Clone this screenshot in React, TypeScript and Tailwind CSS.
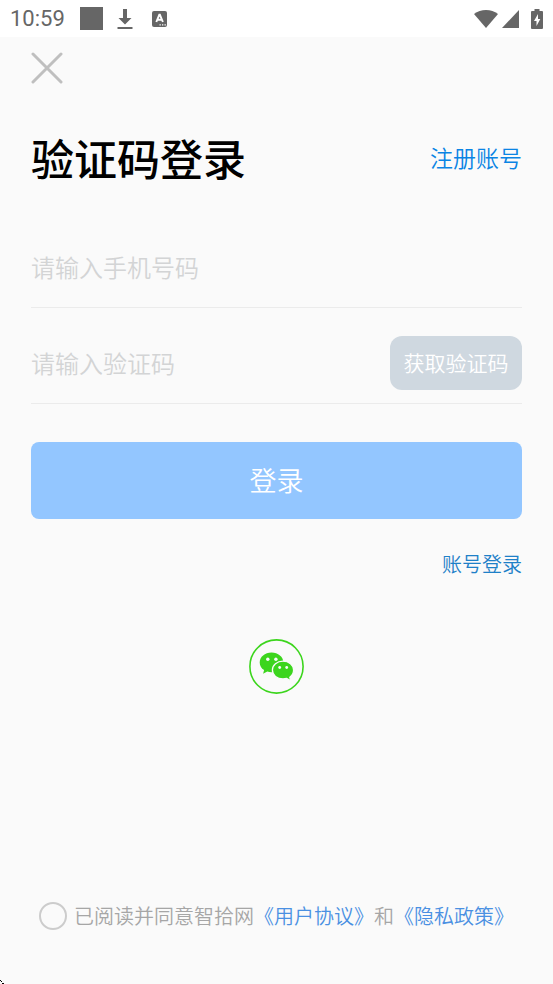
import { useState } from "react";
import type { FormEvent } from "react";

function StatusBar() {
  return (
    <div className="flex h-[37px] shrink-0 items-center justify-between bg-white px-[10px] text-[#666666]">
      <div className="flex items-center">
        <span className="font-[Roboto,sans-serif] text-[22px] font-normal leading-6">
          10:59
        </span>
        <span className="ml-[15px] h-[23px] w-[23px] bg-[#666666]" />
        <svg className="ml-[14px] h-[22px] w-4" viewBox="0 0 16 22" fill="currentColor">
          <path d="M6 1h4v9h4.5L8 16.5 1.500 10H6z" />
          <path d="M0.500 19h15v2h-15z" />
        </svg>
        <svg className="ml-[19px] h-4 w-[15px]" viewBox="0 0 15 16">
          <rect width="15" height="16" rx="2" fill="currentColor" />
          <path
            d="M4.300 11 7.300 3.800h.6L10.900 11M5.500 8.800h4.200"
            fill="none"
            stroke="white"
            strokeWidth="1.900"
          />
          <path d="M7.500 13.200h1.300v1.300H7.500zM10 13.200h1.300v1.300H10zM12.500 13.200h1.300v1.300h-1.300z" fill="white" />
        </svg>
      </div>
      <div className="flex items-center" aria-hidden="true">
        <svg className="h-[18px] w-6" viewBox="0 0 24 18" fill="currentColor">
          <path d="M12 18 0 4C3.500 1.300 7.500 0 12 0s8.500 1.300 12 4z" />
        </svg>
        <svg className="ml-1 h-[18px] w-[17px]" viewBox="0 0 17 18" fill="currentColor">
          <path d="M17 0v18H0z" />
        </svg>
        <svg className="ml-3 h-5 w-3" viewBox="0 0 12 20">
          <path d="M3.500 0h5v2H11a1 1 0 0 1 1 1v16a1 1 0 0 1-1 1H1a1 1 0 0 1-1-1V3a1 1 0 0 1 1-1h2.500z" fill="currentColor" />
          <path d="M7 5 3 12h2.500v5L9.300 10H7z" fill="white" />
        </svg>
      </div>
    </div>
  );
}

function WechatIcon() {
  return (
    <svg className="h-[55px] w-[55px]" viewBox="0 0 55 55">
      <circle cx="27.500" cy="27.500" r="26.600" fill="none" stroke="#3cd51d" strokeWidth="1.600" />
      <path
        d="M22.500 13.500c-6.600 0-11.800 4.400-11.800 9.900 0 3.200 1.600 5.900 4.400 7.700l-1 3.700 4.200-2.200c1.300.4 2.700.6 4.200.6 6.600 0 11.900-4.300 11.900-9.800s-5.300-9.900-11.900-9.900z"
        fill="#3cd51d"
      />
      <path
        d="M34 22.200c-6 0-10.600 3.900-10.600 8.900S28 40 34 40c1.300 0 2.600-.2 3.700-.5l4 2.200-.9-3.400c2.300-1.600 3.800-4.200 3.800-7.200 0-5-4.700-8.900-10.600-8.900z"
        fill="#3cd51d"
        stroke="#fafafa"
        strokeWidth="1.300"
      />
      <g fill="#fafafa">
        <circle cx="18.800" cy="20.300" r="1.700" />
        <circle cx="26.900" cy="20.300" r="1.700" />
        <circle cx="30.700" cy="28.500" r="1.400" />
        <circle cx="37.700" cy="28.500" r="1.400" />
      </g>
    </svg>
  );
}

export default function App() {
  const [phone, setPhone] = useState("");
  const [code, setCode] = useState("");
  const [agreed, setAgreed] = useState(false);

  function handleSubmit(e: FormEvent) {
    e.preventDefault();
  }

  return (
    <div className="relative flex min-h-screen flex-col bg-[#fafafa] font-['Noto_Sans_CJK_SC',sans-serif] font-[350]">
      <StatusBar />

      <main className="flex flex-1 flex-col px-[31px] pt-[15px]">
        <button type="button" aria-label="关闭" className="h-8 w-8">
          <svg
            className="h-8 w-8"
            viewBox="0 0 32 32"
            stroke="#bfbfbf"
            strokeWidth="3"
            strokeLinecap="round"
          >
            <path d="M2 2l28 28M30 2 2 30" />
          </svg>
        </button>

        <div className="mt-[41px] flex items-center justify-between">
          <h1 className="text-[43px] font-medium leading-[64px] text-black">
            验证码登录
          </h1>
          <a href="#register" className="text-[23px] leading-8 text-[#0a84e4]">
            注册账号
          </a>
        </div>

        <form onSubmit={handleSubmit} className="mt-[37px]">
          <div className="flex h-[82px] items-center border-b border-[#ebebeb]">
            <input
              type="tel"
              aria-label="手机号码"
              placeholder="请输入手机号码"
              value={phone}
              onChange={(e) => setPhone(e.target.value)}
              className="h-12 w-full min-w-0 bg-transparent text-2xl text-gray-800 outline-none placeholder:text-[#d3d4d5]"
            />
          </div>

          <div className="mt-[14px] flex h-[82px] items-center border-b border-[#ebebeb]">
            <input
              type="text"
              aria-label="验证码"
              placeholder="请输入验证码"
              value={code}
              onChange={(e) => setCode(e.target.value)}
              className="h-12 min-w-0 flex-1 bg-transparent text-2xl text-gray-800 outline-none placeholder:text-[#d3d4d5]"
            />
            <button
              type="button"
              className="h-[54px] w-[132px] shrink-0 rounded-xl bg-[#cfd8e0] text-[21px] text-white"
            >
              获取验证码
            </button>
          </div>

          <button
            type="submit"
            className="mt-[38px] h-[77px] w-full rounded-lg bg-[#93c6ff] text-[27px] text-white"
          >
            登录
          </button>
        </form>

        <a
          href="#account"
          className="mt-[30px] self-end text-xl leading-[30px] text-[#1e80c8]"
        >
          账号登录
        </a>

        <button type="button" aria-label="微信登录" className="mt-[60px] self-center">
          <WechatIcon />
        </button>

        <div className="mb-[53px] mt-auto flex items-center pl-2 text-xl leading-[30px] text-[#a6a6a6]">
          <input
            id="agree"
            type="checkbox"
            checked={agreed}
            onChange={(e) => setAgreed(e.target.checked)}
            className="h-7 w-7 shrink-0 appearance-none rounded-full border-2 border-[#cccccc] checked:border-[#4a90e2] checked:bg-[#4a90e2]"
          />
          <p className="ml-[7px]">
            <label htmlFor="agree">已阅读并同意智拾网</label>
            <a href="#terms" className="text-[#4a90e2]">
              《用户协议》
            </a>
            和
            <a href="#privacy" className="text-[#4a90e2]">
              《隐私政策》
            </a>
          </p>
        </div>
      </main>

      {/* Corner mark */}
      <svg className="absolute bottom-0 left-0 h-1 w-1" viewBox="0 0 4 4" shapeRendering="crispEdges">
        <path d="M0 0h1v1H0zM1 1h1v1H1zM2 3h2v1H2z" fill="black" />
      </svg>
    </div>
  );
}
